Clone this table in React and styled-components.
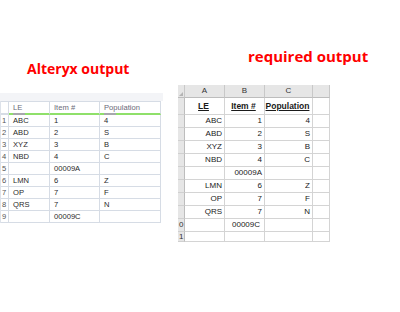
import React from 'react';
import styled, { createGlobalStyle } from 'styled-components';

const GlobalStyle = createGlobalStyle`
  html, body { margin: 0; padding: 0; background: #fff; }
  body { width: 400px; height: 312px; overflow: hidden; font-family: "Liberation Sans", Arial, sans-serif; }
`;

const alteryxRows = [
  ['1', 'ABC', '1', '4'],
  ['2', 'ABD', '2', 'S'],
  ['3', 'XYZ', '3', 'B'],
  ['4', 'NBD', '4', 'C'],
  ['5', '', '00009A', ''],
  ['6', 'LMN', '6', 'Z'],
  ['7', 'OP', '7', 'F'],
  ['8', 'QRS', '7', 'N'],
  ['9', '', '00009C', ''],
];

// the row-number column of the sheet is cropped in the picture: only stubs show
const excelRows = [
  ['', 'ABC', '1', '4'],
  ['', 'ABD', '2', 'S'],
  ['', 'XYZ', '3', 'B'],
  ['', 'NBD', '4', 'C'],
  ['', '', '00009A', ''],
  ['', 'LMN', '6', 'Z'],
  ['', 'OP', '7', 'F'],
  ['', 'QRS', '7', 'N'],
  ['0', '', '00009C', '', 'left'],
];

const Page = styled.div`
  display: flex;
  align-items: flex-start;
`;

const LeftPanel = styled.div`
  width: 163px;
  padding-top: 60px;
  display: flex;
  flex-direction: column;
`;

const RightPanel = styled.div`
  margin-left: 15px;
  width: 152px;
  padding-top: 47px;
  display: flex;
  flex-direction: column;
`;

const Title = styled.div`
  color: #ff0000;
  font-family: "Open Sans", "Liberation Sans", sans-serif;
  font-weight: 700;
  font-size: ${p => p.$size}px;
  line-height: 18px;
  padding-left: ${p => p.$indent}px;
  white-space: nowrap;
`;

const Band = styled.div`
  margin-top: 15px;
  height: 8px;
  background: #f3f4f7;
`;

const Grid = styled.div`
  display: grid;
  grid-template-columns: 8px 41px 50px 61px;
  width: 160px;
  border-left: 1px solid #dde2ea;
  font-size: 7.6px;
  color: #3a3a3a;
`;

const HeadCell = styled.div`
  height: 11px;
  padding-left: 4px;
  border-right: 1px solid #d6dce5;
  border-top: 1px solid #d6dce5;
  border-bottom: 2px solid ${p => (p.$blank ? '#d6dce5' : '#8fe06a')};
  color: #6a6a78;
  line-height: 11px;
  white-space: nowrap;
  position: relative;
  &::after {
    content: '';
    display: ${p => (p.$sorted ? 'block' : 'none')};
    position: absolute;
    left: 4px;
    bottom: -2px;
    width: 12px;
    height: 2px;
    background: #a7a7ad;
  }
`;

const Cell = styled.div`
  height: 11px;
  line-height: 11px;
  padding-left: ${p => (p.$num ? 1 : 4)}px;
  border-right: 1px solid #d6dce5;
  border-bottom: 1px solid #d6dce5;
  color: ${p => (p.$num ? '#555' : '#2a2a2a')};
  white-space: nowrap;
  overflow: hidden;
`;

const Sheet = styled.div`
  margin-top: 20px;
  display: grid;
  grid-template-columns: 7px 40px 40px 48px 17px;
  font-size: 8px;
  color: #1a1a1a;
`;

const ColHead = styled.div`
  height: 12px;
  line-height: 12px;
  background: #e6e6e6;
  border-right: 1px solid #c8c8c8;
  border-bottom: 1px solid #bdbdbd;
  text-align: center;
  color: #333;
  position: relative;
`;

const Corner = styled.div`
  position: absolute;
  right: 1px;
  bottom: 1px;
  width: 0;
  height: 0;
  border-left: 4px solid transparent;
  border-bottom: 4px solid #b4b4b4;
`;

const RowHead = styled.div`
  height: ${p => p.$h}px;
  line-height: ${p => p.$h}px;
  background: #e6e6e6;
  border-right: 1px solid #bdbdbd;
  border-bottom: 1px solid #d0d0d0;
  font-size: 8px;
  color: #333;
  padding-left: 1px;
  white-space: nowrap;
`;

const XCell = styled.div`
  height: ${p => p.$h}px;
  line-height: ${p => p.$h}px;
  border-right: 1px solid #d4d4d4;
  border-bottom: 1px solid #d4d4d4;
  text-align: ${p => p.$align};
  padding: ${p => (p.$align === 'left' ? '0 0 0 7px' : '0 2px 0 0')};
  font-weight: ${p => (p.$head ? 700 : 400)};
  font-size: ${p => (p.$head ? 8.5 : 8)}px;
  text-decoration: ${p => (p.$head ? 'underline' : 'none')};
  white-space: nowrap;
  overflow: hidden;
`;

const AlteryxTable = () => (
  <Grid>
    <HeadCell $blank />
    <HeadCell $sorted>LE</HeadCell>
    <HeadCell>Item #</HeadCell>
    <HeadCell $sorted>Population</HeadCell>
    {alteryxRows.map(row =>
      row.map((v, i) => (
        <Cell key={row[0] + '-' + i} $num={i === 0}>
          {v}
        </Cell>
      ))
    )}
  </Grid>
);

const ExcelSheet = () => (
  <Sheet>
    <ColHead>
      <Corner />
    </ColHead>
    <ColHead>A</ColHead>
    <ColHead>B</ColHead>
    <ColHead>C</ColHead>
    <ColHead />
    <RowHead $h={16} />
    <XCell $h={16} $head $align="center">LE</XCell>
    <XCell $h={16} $head $align="center">Item #</XCell>
    <XCell $h={16} $head $align="center">Population</XCell>
    <XCell $h={16} />
    {excelRows.map((row, r) => (
      <React.Fragment key={r}>
        <RowHead $h={12}>{row[0]}</RowHead>
        <XCell $h={12} $align="right">{row[1]}</XCell>
        <XCell $h={12} $align={row[4] || 'right'}>{row[2]}</XCell>
        <XCell $h={12} $align="right">{row[3]}</XCell>
        <XCell $h={12} />
      </React.Fragment>
    ))}
    <RowHead $h={9}>1</RowHead>
    <XCell $h={9} />
    <XCell $h={9} />
    <XCell $h={9} />
    <XCell $h={9} />
  </Sheet>
);

export default function App() {
  return (
    <>
      <GlobalStyle />
      <Page>
        <LeftPanel>
          <Title $size={14} $indent={27}>Alteryx output</Title>
          <Band />
          <AlteryxTable />
        </LeftPanel>
        <RightPanel>
          <Title $size={15} $indent={70}>required output</Title>
          <ExcelSheet />
        </RightPanel>
      </Page>
    </>
  );
}
